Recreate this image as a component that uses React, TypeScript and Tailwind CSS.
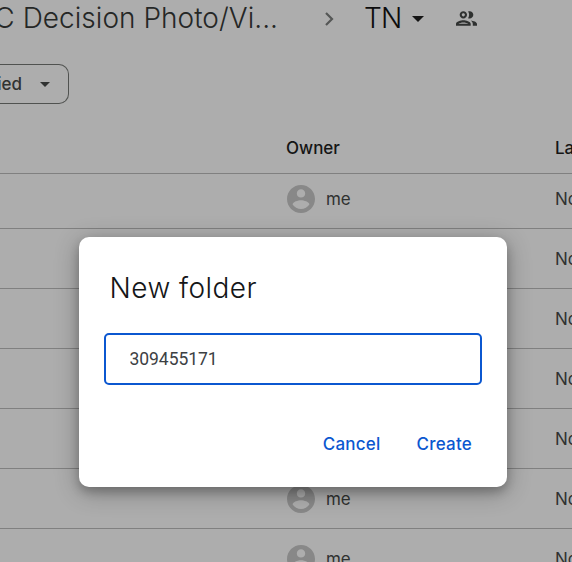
import { ReactNode } from 'react';

function Avatar() {
  return (
    <svg viewBox="2 2 20 20" className="h-7 w-7 shrink-0" fill="#888888">
      <path d="M12 2C6.48 2 2 6.48 2 12s4.48 10 10 10 10-4.48 10-10S17.52 2 12 2zm0 3c1.66 0 3 1.34 3 3s-1.34 3-3 3-3-1.34-3-3 1.34-3 3-3zm0 14.2c-2.5 0-4.71-1.28-6-3.22.03-1.99 4-3.08 6-3.08 1.99 0 5.97 1.09 6 3.08-1.29 1.94-3.5 3.22-6 3.22z" />
    </svg>
  );
}

function Caret({ className }: { className: string }) {
  return (
    <svg viewBox="0 0 10 5" className={`shrink-0 ${className}`} fill="currentColor">
      <path d="M0 0h10L5 5z" />
    </svg>
  );
}

function PeopleIcon() {
  return (
    <svg viewBox="2 5 20 14" className="ml-8 mt-[11px] h-[15px] w-[21px] shrink-0" fill="#2f3130">
      <path d="M9 13.75c-2.34 0-7 1.17-7 3.5V19h14v-1.75c0-2.33-4.66-3.5-7-3.5zM4.34 17c.84-.58 2.87-1.25 4.66-1.25s3.82.67 4.66 1.25H4.34zM9 12c1.93 0 3.5-1.57 3.5-3.5S10.93 5 9 5 5.5 6.57 5.5 8.5 7.07 12 9 12zm0-5c.83 0 1.5.67 1.5 1.5S9.83 10 9 10s-1.5-.67-1.5-1.5S8.17 7 9 7zm7.04 6.81c1.16.84 1.96 1.96 1.96 3.44V19h4v-1.75c0-2.02-3.5-3.17-5.96-3.44zM15 12c1.93 0 3.5-1.57 3.5-3.5S16.93 5 15 5c-.54 0-1.04.13-1.5.35.63.89 1 1.98 1 3.15s-.37 2.26-1 3.15c.46.22.96.35 1.5.35z" />
    </svg>
  );
}

function Row({ children, className }: { children: ReactNode; className: string }) {
  return (
    <div className={`flex items-center border-b border-[#808080] pl-[287px] ${className}`}>
      {children}
    </div>
  );
}

export default function App() {
  return (
    <div className="relative h-[562px] w-[572px] overflow-hidden bg-[#adadad] font-['Inter',sans-serif] text-[#303231]">
      <header className="flex h-16 items-start whitespace-nowrap text-[28px] leading-[36px]">
        <div className="flex w-[278px] shrink-0 justify-end font-light tracking-[0.03px] text-[#252726]">C Decision Photo/Vi...</div>
        <svg viewBox="0 0 9 14" className="ml-[47px] mt-3 h-[14px] w-[9px] shrink-0" fill="none" stroke="#555756" strokeWidth="2.2">
          <path d="M1 1l6 6-6 6" />
        </svg>
        <div className="ml-[30px] w-[37px] font-light tracking-[-0.8px] text-[#0c0c0c]">TN</div>
        <Caret className="ml-[11px] mt-4 h-[6px] w-3 text-[#151515]" />
        <PeopleIcon />
      </header>
      <div className="flex h-10 w-[69px] items-center justify-end rounded-r-[10px] border border-l-0 border-[#505250] pr-[18px] text-[17px] font-medium">
        <span className="pt-px">ied</span>
        <Caret className="ml-[18px] h-[5px] w-[10px]" />
      </div>
      <div className="mt-[19px] flex h-[51px] items-center whitespace-nowrap border-b border-[#808080] pl-[286px] pt-0.5 text-[17px] font-medium text-[#151515]">
        <span className="w-[269px] shrink-0">Owner</span>
        <span>Last modified</span>
      </div>
      {[0, 1, 2, 3, 4, 5, 6].map((i) => (
        <Row key={i} className={i === 0 ? 'h-[55px] pb-1' : 'h-[60px]'}>
          <Avatar />
          <span className="ml-[11px] w-[229px] shrink-0 pt-0.5 text-[17px] tracking-[-0.2px]">me</span>
          <span className="whitespace-nowrap pt-0.5 text-[17px]">Nov 12</span>
        </Row>
      ))}
      <div
        role="dialog"
        className="absolute left-[79px] top-[237px] flex h-[250px] w-[428px] flex-col rounded-[10px] bg-white px-[25px] shadow-[0_5px_24px_rgba(0,0,0,0.3),0_5px_10px_rgba(0,0,0,0.2)]"
      >
        <h1 className="ml-[5.5px] mt-8 text-[28px] font-light leading-[38px] tracking-[0.45px] text-[#141618]">New folder</h1>
        <input
          defaultValue="309455171"
          className="mt-[26px] h-[52px] w-[378px] rounded-[5px] border-2 border-[#0b57d0] bg-white px-[23.5px] font-['Roboto',sans-serif] text-[17.5px] tracking-[-0.05px] text-[#3c4043] outline-none"
        />
        <div className="mt-[47px] flex justify-end gap-[36px] pr-[10px] text-[17px] font-medium leading-[24px] tracking-[0.22px] text-[#0b57d0]">
          <button>Cancel</button>
          <button>Create</button>
        </div>
      </div>
    </div>
  );
}
